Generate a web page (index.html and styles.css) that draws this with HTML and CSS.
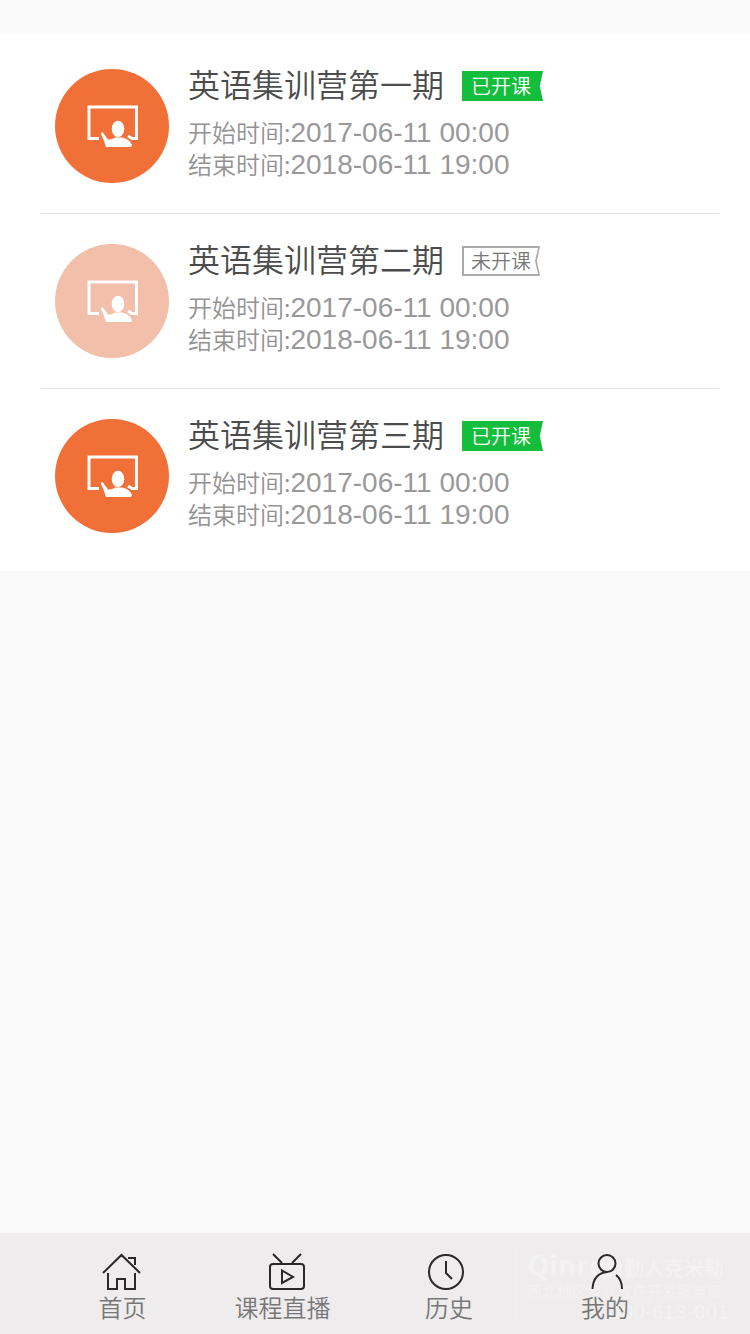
FILE: index.html
```
<!DOCTYPE html>
<html lang="zh-CN">
<head>
  <meta charset="UTF-8">
  <meta name="viewport" content="width=device-width, initial-scale=1">
  <title>英语集训营</title>
  <link rel="stylesheet" href="styles.css">
</head>
<body>
  <svg class="symbols" aria-hidden="true">
    <symbol id="lesson" viewBox="0 0 114 114">
      <path class="board" d="M44 69.500H34V38H81.500V69.500H77L73 67"/>
      <ellipse cx="63" cy="60" rx="6.300" ry="8.300"/>
      <path d="M46.500 63Q48 63 49 65L53 70.500Q57 71 60 68.500H67Q75 70 77 76Q77 78 75 78H51Q49 71 46 65Z"/>
    </symbol>
  </svg>
  <main class="list">
    <article class="item">
      <svg class="avatar" aria-hidden="true"><use href="#lesson"/></svg>
      <div class="info">
        <div class="title">
          <h2>英语集训营第一期</h2>
          <span class="tag open">已开课</span>
        </div>
        <p>开始时间:<time>2017-06-11 00:00</time></p>
        <p>结束时间:<time>2018-06-11 19:00</time></p>
      </div>
    </article>
    <article class="item closed">
      <svg class="avatar" aria-hidden="true"><use href="#lesson"/></svg>
      <div class="info">
        <div class="title">
          <h2>英语集训营第二期</h2>
          <span class="tag">未开课</span>
        </div>
        <p>开始时间:<time>2017-06-11 00:00</time></p>
        <p>结束时间:<time>2018-06-11 19:00</time></p>
      </div>
    </article>
    <article class="item">
      <svg class="avatar" aria-hidden="true"><use href="#lesson"/></svg>
      <div class="info">
        <div class="title">
          <h2>英语集训营第三期</h2>
          <span class="tag open">已开课</span>
        </div>
        <p>开始时间:<time>2017-06-11 00:00</time></p>
        <p>结束时间:<time>2018-06-11 19:00</time></p>
      </div>
    </article>
  </main>

  <nav class="tabbar">
    <div class="watermark">
      <div class="brand"><b>Qinren</b>勤人克米勒</div>
      <div class="slogan">西北地区专业软件开发服务商</div>
      <div class="phone">400-613-001</div>
    </div>
    <a href="#home">
      <svg viewBox="0 0 40 40" aria-hidden="true">
        <path d="M0 20 18.500 2 37 20M5 20V36H14V26H22V36H32V20M25 5H32V12"/>
      </svg>
      首页
    </a>
    <a href="#live">
      <svg viewBox="0 0 40 40" aria-hidden="true">
        <rect x="7" y="11" width="34" height="25" rx="3"/>
        <path d="M10 1 19 10M38 1 29 10M19 17.500V30L30 24Z"/>
      </svg>
      课程直播
    </a>
    <a href="#history">
      <svg viewBox="0 0 40 40" aria-hidden="true">
        <circle cx="17" cy="19" r="17"/>
        <path d="M17 8V20L23 26"/>
      </svg>
      历史
    </a>
    <a href="#mine">
      <svg viewBox="0 0 40 40" aria-hidden="true">
        <circle cx="22" cy="10.500" r="8.500"/>
        <path d="M7.500 36C8 27 12 20 22 19M31 22C35 25 37 30 37 36"/>
      </svg>
      我的
    </a>
  </nav>
</body>
</html>
```
FILE: styles.css
```
body {
    display: flex;
    flex-direction: column;
    min-height: 100vh;
    margin: 0;
    background: #f9f9f9;
    font-family: "Noto Sans CJK SC", sans-serif;
    font-weight: 350;
}

.symbols {
    position: absolute;
    width: 0;
    height: 0;
}

.list {
    margin-top: 33px;
    padding: 6px 31px 8px 41px;
    background: #fff;
}

.item {
    display: flex;
    gap: 19px;
    padding: 30px 14px;
}

.item + .item {
    border-top: 1px solid #e3e3e3;
}

.avatar {
    width: 114px;
    height: 114px;
    border-radius: 50%;
    background: #f17037;
    fill: #fff;
}

.closed .avatar {
    background: #f1bfaa;
}

.board {
    fill: none;
    stroke: #fff;
    stroke-width: 3;
}

.title {
    display: flex;
    align-items: flex-start;
    gap: 18px;
    height: 32px;
    margin-bottom: 15px;
}

h2 {
    margin: 0;
    font-size: 32px;
    line-height: 28px;
    font-weight: 350;
    color: #4c4c4c;
}

.tag {
    position: relative;
    z-index: 0;
    align-self: flex-end;
    padding: 0 12px 0 9px;
    font-size: 20px;
    line-height: 30px;
    color: #fff;
    background: #14be3c;
    clip-path: polygon(0 0, 100% 0, 96% 50%, 100% 100%, 0 100%);
}

.closed .tag {
    padding-right: 9px;
    color: #777;
    background: #aaa;
}

/* white inside of the outlined tag */
.closed .tag::before {
    content: "";
    position: absolute;
    z-index: -1;
    inset: 2px;
    background: #fff;
    clip-path: polygon(0 0, 100% 0, 96% 50%, 100% 100%, 0 100%);
}

p {
    margin: 0;
    font-size: 24px;
    line-height: 32px;
    color: #929292;
}

time {
    font-family: "Liberation Sans", Arial, sans-serif;
    font-size: 28px;
    line-height: 28px;
    color: #999;
}

.tabbar {
    position: relative;
    z-index: 0;
    display: grid;
    grid-template-columns: 161fr 159fr 174fr 138fr;
    margin-top: auto;
    padding: 20px 76px 13px 42px;
    background: #eeecec;
}

.tabbar a {
    display: flex;
    flex-direction: column;
    align-items: center;
    font-size: 24px;
    line-height: 28px;
    color: #777;
    text-decoration: none;
}

.tabbar svg {
    width: 40px;
    height: 40px;
    overflow: visible;
    fill: none;
    stroke: #2b2828;
    stroke-width: 2;
}

.watermark {
    position: absolute;
    z-index: -1;
    right: 12px;
    bottom: 8px;
    box-sizing: border-box;
    width: 222px;
    height: 82px;
    padding: 6px 8px 0 10px;
    border: 1px solid #f0eeee;
    color: #f3f2f2;
    pointer-events: none;
    white-space: nowrap;
}

.brand {
    font-size: 20px;
    line-height: 28px;
    font-weight: 500;
}

.brand b {
    font-family: "Open Sans", sans-serif;
    font-size: 28px;
}

.slogan {
    font-size: 15px;
    line-height: 18px;
}

.phone {
    font-family: "Liberation Sans", Arial, sans-serif;
    font-size: 21px;
    line-height: 24px;
    text-align: right;
}
```
